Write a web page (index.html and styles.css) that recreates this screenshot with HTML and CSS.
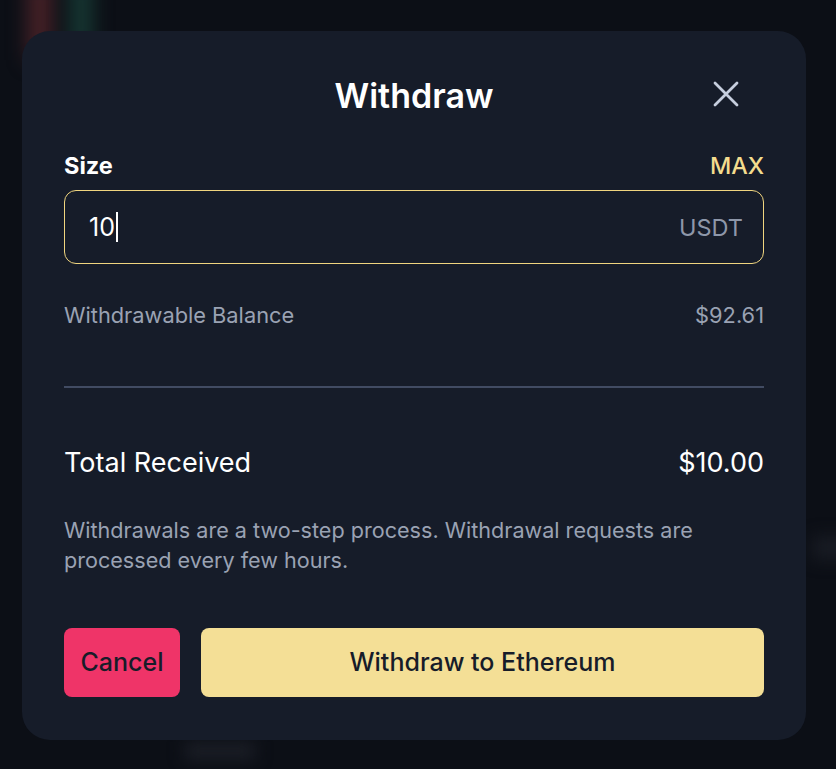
FILE: index.html
```html
<!DOCTYPE html>
<html lang="en">
<head>
<meta charset="utf-8">
<title>Withdraw</title>
<link rel="stylesheet" href="styles.css">
</head>
<body>
<div class="backdrop">
  <div class="glow glow-red"></div>
  <div class="glow glow-green"></div>
  <div class="glow glow-bottom"></div>
  <div class="glow glow-right"></div>
</div>
<div class="modal">
  <div class="header">
    <h1 class="title">Withdraw</h1>
    <button class="close" aria-label="Close">
      <svg width="28" height="28" viewBox="0 0 28 28"><path d="M3 3 L25 25 M25 3 L3 25" stroke="#c6cede" stroke-width="2.8" stroke-linecap="round" fill="none"/></svg>
    </button>
  </div>
  <div class="label-row">
    <span class="label">Size</span>
    <span class="max">MAX</span>
  </div>
  <div class="input">
    <span class="value">10<span class="caret"></span></span>
    <span class="unit">USDT</span>
  </div>
  <div class="balance-row">
    <span>Withdrawable Balance</span>
    <span>$92.61</span>
  </div>
  <div class="divider"></div>
  <div class="total-row">
    <span>Total Received</span>
    <span>$10.00</span>
  </div>
  <p class="note">Withdrawals are a two-step process. Withdrawal requests are processed every few hours.</p>
  <div class="actions">
    <button class="btn btn-cancel">Cancel</button>
    <button class="btn btn-primary">Withdraw to Ethereum</button>
  </div>
</div>
</body>
</html>
```
FILE: styles.css
```css
* { box-sizing: border-box; }
html, body { margin: 0; padding: 0; }
body {
  width: 836px;
  height: 769px;
  overflow: hidden;
  background: #0c0f16;
  font-family: Inter, "Noto Sans", sans-serif;
  position: relative;
  padding: 31px 0 0 22px;
}
.backdrop { position: absolute; inset: 0; overflow: hidden; }
.glow { position: absolute; filter: blur(10px); }
.glow-red { left: 28px; top: -20px; width: 24px; height: 80px; background: #4a2228; }
.glow-green { left: 70px; top: -20px; width: 22px; height: 70px; background: #173a35; }
.glow-bottom { left: 185px; top: 742px; width: 70px; height: 18px; background: #1b1e26; filter: blur(8px); }
.glow-right { left: 812px; top: 536px; width: 40px; height: 24px; background: #181b23; filter: blur(8px); }

.modal {
  position: relative;
  width: 784px;
  height: 709px;
  background: #161c29;
  border-radius: 28px;
  padding: 32px 42px 43px;
  display: flex;
  flex-direction: column;
}
.header {
  height: 64px;
  display: flex;
  align-items: center;
  justify-content: center;
  position: relative;
}
.title {
  margin: 0;
  font-size: 34px;
  font-weight: 600;
  color: #ffffff;
}
.close {
  position: absolute;
  right: 24px;
  top: 17px;
  width: 28px;
  height: 28px;
  padding: 0;
  border: 0;
  background: none;
  display: flex;
}
.label-row {
  margin-top: 24px;
  height: 28px;
  display: flex;
  justify-content: space-between;
  align-items: center;
}
.label { font-size: 23.5px; font-weight: 700; color: #ffffff; }
.max { font-size: 23.3px; font-weight: 500; color: #f4dc8e; }
.input {
  margin-top: 11px;
  height: 74px;
  border: 1px solid #f0d57f;
  border-radius: 12px;
  display: flex;
  justify-content: space-between;
  align-items: center;
  padding: 0 20px 0 24px;
}
.value { font-size: 25px; color: #ffffff; display: flex; align-items: center; }
.caret { display: inline-block; width: 2px; height: 30px; background: #ffffff; margin-left: 1px; }
.unit { font-size: 23.5px; color: #8e97a9; }
.balance-row {
  margin-top: 37px;
  height: 28px;
  display: flex;
  justify-content: space-between;
  align-items: center;
  font-size: 21.8px;
  color: #9aa2b3;
}
.divider {
  margin-top: 57px;
  height: 2px;
  background: #414b62;
}
.total-row {
  margin-top: 58px;
  height: 32px;
  display: flex;
  justify-content: space-between;
  align-items: center;
  font-size: 27px;
  color: #ffffff;
}
.note {
  margin: 37px 0 0;
  font-size: 21.6px;
  line-height: 30px;
  color: #9aa2b3;
}
.actions {
  margin-top: auto;
  display: flex;
  gap: 21px;
  height: 69px;
}
.btn {
  border: 0;
  border-radius: 8px;
  font-family: Inter, "Noto Sans", sans-serif;
  font-size: 25px;
  font-weight: 500;
  color: #171c29;
  cursor: pointer;
  padding: 0 0 2px;
}
.btn-cancel { width: 116px; background: #ef3468; }
.btn-primary { flex: 1; background: #f4df96; }
```
